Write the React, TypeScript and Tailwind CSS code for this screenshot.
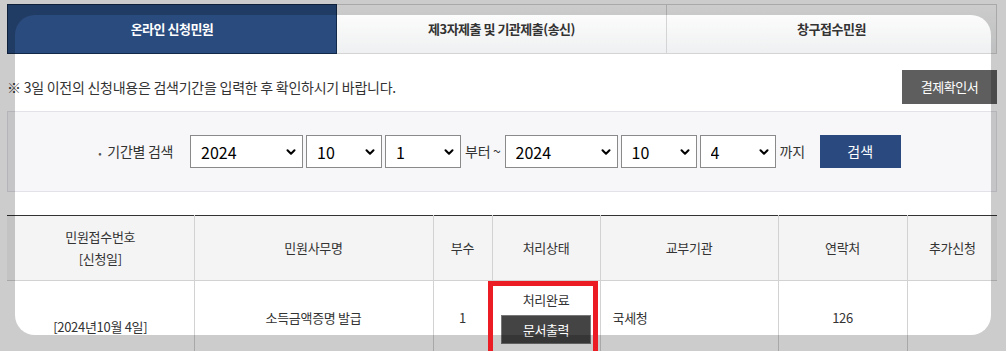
import { ChevronDown } from "lucide-react";

const font = { fontFamily: '"Noto Sans CJK KR", "Noto Sans", sans-serif' };

const tabs = [
  { id: "online", label: "온라인 신청민원" },
  { id: "send", label: "제3자제출 및 기관제출(송신)" },
  { id: "counter", label: "창구접수민원" },
];

function DateSelect({ value, width }: { value: string; width: string }) {
  return (
    <div className={`relative h-[33px] ${width}`}>
      <select
        defaultValue={value}
        className="h-full w-full appearance-none border border-[#8a8a8a] bg-white pl-[10px] text-[16px] text-black outline-none"
      >
        <option value={value}>{value}</option>
      </select>
      <ChevronDown
        size={14}
        strokeWidth={3.5}
        className="pointer-events-none absolute right-[5px] top-[10px] text-black"
      />
    </div>
  );
}

export default function App() {
  return (
    <div className="relative h-[351px] w-[1006px] overflow-hidden bg-white" style={font}>
      <div className="ml-[7px] w-[990px] pt-[4px]">
        {/* TABS */}
        <div className="flex h-[50px]">
          {tabs.map((tab, i) =>
            i === 0 ? (
              <div
                key={tab.id}
                className="flex w-[330px] items-center justify-center border border-[#13294a] bg-[#2a4b7e] text-[13px] font-bold tracking-[-0.5px] text-white"
              >
                {tab.label}
              </div>
            ) : (
              <div
                key={tab.id}
                className="flex w-[330px] items-center justify-center border border-l-0 border-[#d4d4d4] bg-gradient-to-b from-white to-[#eff0f1] text-[13px] font-bold tracking-[-0.5px] text-[#333]"
              >
                {tab.label}
              </div>
            )
          )}
        </div>

        {/* NOTICE */}
        <div className="mt-[16px] flex items-center justify-between">
          <p className="text-[14px] tracking-[-0.25px] text-[#333]">
            ※ 3일 이전의 신청내용은 검색기간을 입력한 후 확인하시기 바랍니다.
          </p>
          <button className="h-[34px] w-[95px] bg-[#5e5e5e] text-[13px] tracking-[-0.5px] text-white">
            결제확인서
          </button>
        </div>

        {/* SEARCH */}
        <div className="mt-[7px] flex h-[81px] items-center justify-center border border-[#e2e2e8] bg-[#f7f7f9] pr-[5px]">
          <span className="mr-[17px] text-[14px] tracking-[-0.3px] text-[#333]">
            <span className="mr-[6px] text-[10px] text-[#555]">•</span>기간별 검색
          </span>
          <div className="flex items-center gap-[3px]">
            <DateSelect value="2024" width="w-[113px]" />
            <DateSelect value="10" width="w-[76px]" />
            <DateSelect value="1" width="w-[76px]" />
            <span className="mx-[1px] text-[14px] tracking-[-0.3px] text-[#333]">부터 ~</span>
            <DateSelect value="2024" width="w-[113px]" />
            <DateSelect value="10" width="w-[76px]" />
            <DateSelect value="4" width="w-[76px]" />
            <span className="ml-[1px] text-[14px] tracking-[-0.3px] text-[#333]">까지</span>
          </div>
          <button className="ml-[15px] h-[33px] w-[81px] bg-[#2a4a7f] text-[14px] text-white">
            검색
          </button>
        </div>

        {/* TABLE */}
        <table className="mt-[23px] w-[990px] table-fixed border-collapse border-t border-[#333] text-[13px] tracking-[-0.3px] text-[#333]">
          <colgroup>
            <col className="w-[187px]" />
            <col className="w-[239px]" />
            <col className="w-[59px]" />
            <col className="w-[108px]" />
            <col className="w-[178px]" />
            <col className="w-[129px]" />
            <col className="w-[90px]" />
          </colgroup>
          <thead>
            <tr className="h-[65px] bg-[#f4f4f4]">
              <th className="border-b border-[#d2d2d2] font-normal leading-[22px]">
                민원접수번호
                <br />
                [신청일]
              </th>
              <th className="border-b border-l border-[#d2d2d2] font-normal">민원사무명</th>
              <th className="border-b border-l border-[#d2d2d2] font-normal">부수</th>
              <th className="border-b border-l border-[#d2d2d2] font-normal">처리상태</th>
              <th className="border-b border-l border-[#d2d2d2] font-normal">교부기관</th>
              <th className="border-b border-l border-[#d2d2d2] font-normal">연락처</th>
              <th className="border-b border-l border-[#d2d2d2] font-normal">추가신청</th>
            </tr>
          </thead>
          <tbody>
            <tr className="h-[73px]">
              <td className="text-center leading-[20px]">
                &nbsp;
                <br />
                [2024년10월 4일]
              </td>
              <td className="border-l border-[#d2d2d2] text-center">소득금액증명 발급</td>
              <td className="border-l border-[#d2d2d2] text-center">1</td>
              <td className="border-l border-[#d2d2d2] text-center">
                <div className="leading-[20px]">처리완료</div>
                <button className="mt-[5px] h-[29px] w-[90px] border border-[#777] bg-[#444] text-[13px] tracking-[-0.5px] text-white">
                  문서출력
                </button>
              </td>
              <td className="border-l border-[#d2d2d2] pl-[12px] text-left">국세청</td>
              <td className="border-l border-[#d2d2d2] text-center">126</td>
              <td className="border-l border-[#d2d2d2]"></td>
            </tr>
          </tbody>
        </table>
      </div>

      {/* SPOTLIGHT OVERLAY */}
      <div className="pointer-events-none absolute inset-0 overflow-hidden">
        <div className="absolute left-[15px] top-[15px] h-[320px] w-[976px] rounded-[20px] shadow-[0_0_0_2000px_rgba(0,0,0,0.2)]" />
      </div>

      {/* HIGHLIGHT BOX */}
      <div className="pointer-events-none absolute left-[488px] top-[281px] h-[80px] w-[110px] border-[5px] border-[#ec1c24]" />
    </div>
  );
}
